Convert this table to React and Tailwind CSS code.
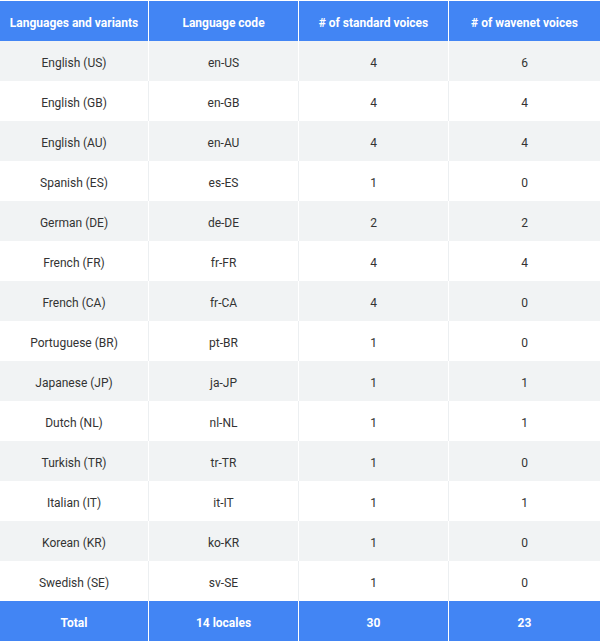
const rows = [
  ["English (US)", "en-US", "4", "6"],
  ["English (GB)", "en-GB", "4", "4"],
  ["English (AU)", "en-AU", "4", "4"],
  ["Spanish (ES)", "es-ES", "1", "0"],
  ["German (DE)", "de-DE", "2", "2"],
  ["French (FR)", "fr-FR", "4", "4"],
  ["French (CA)", "fr-CA", "4", "0"],
  ["Portuguese (BR)", "pt-BR", "1", "0"],
  ["Japanese (JP)", "ja-JP", "1", "1"],
  ["Dutch (NL)", "nl-NL", "1", "1"],
  ["Turkish (TR)", "tr-TR", "1", "0"],
  ["Italian (IT)", "it-IT", "1", "1"],
  ["Korean (KR)", "ko-KR", "1", "0"],
  ["Swedish (SE)", "sv-SE", "1", "0"],
];

const headers = ["Languages and variants", "Language code", "# of standard voices", "# of wavenet voices"];
const footer = ["Total", "14 locales", "30", "23"];

function BlueRow({ cells }) {
  return (
    <div className="grid grid-cols-[149px_150px_150px_151px] h-[40px] bg-[#4285f4]">
      {cells.map((c, i) => (
        <div
          key={i}
          className={`flex items-center justify-center text-white font-bold text-[12px] pt-[4px] ${i < 3 ? "border-r border-white" : ""}`}
        >
          {c}
        </div>
      ))}
    </div>
  );
}

export default function App() {
  return (
    <div className="w-[600px] h-[641px] bg-white pt-px" style={{ fontFamily: "Roboto, 'Liberation Sans', sans-serif" }}>
      <BlueRow cells={headers} />
      {rows.map((r, ri) => (
        <div
          key={ri}
          className={`grid grid-cols-[149px_150px_150px_151px] h-[40px] ${ri % 2 === 0 ? "bg-[#f1f3f4]" : "bg-white"}`}
        >
          {r.map((c, i) => (
            <div
              key={i}
              className={`flex items-center justify-center text-[12px] text-[#333] pt-[4px] ${i < 3 ? (ri % 2 === 0 ? "border-r border-white" : "border-r border-[#eceff1]") : ""}`}
            >
              {c}
            </div>
          ))}
        </div>
      ))}
      <BlueRow cells={footer} />
    </div>
  );
}
